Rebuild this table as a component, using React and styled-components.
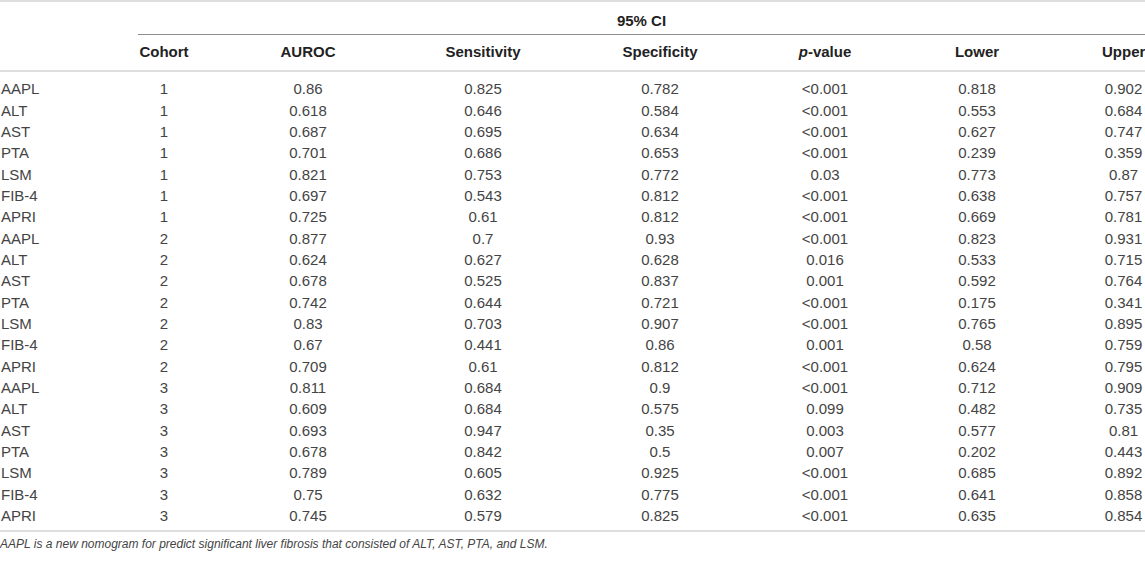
import React from 'react';
import styled, { createGlobalStyle } from 'styled-components';

const GlobalStyle = createGlobalStyle`
  html, body {
    margin: 0;
    background: #fff;
    overflow: hidden;
  }
  body {
    font-family: "Liberation Sans", Arial, Helvetica, sans-serif;
    color: #444;
  }
`;

const columns = '138px 52px 236px 114px 240px 90px 214px 61px';

const Table = styled.div`
  width: 1145px;
  border-top: 2px solid #dedede;
`;

const SpanRow = styled.div`
  display: grid;
  grid-template-columns: ${columns};
  height: 33px;
  padding-top: 5px;
  box-sizing: border-box;
`;

const SpanCell = styled.div`
  grid-column: 2 / -1;
  display: flex;
  align-items: center;
  justify-content: center;
  border-bottom: 1px solid #8e8e8e;
  font-size: 15px;
  font-weight: bold;
  color: #222;
`;

const Row = styled.div`
  display: grid;
  grid-template-columns: ${columns};
  align-items: center;
  height: ${({ $head }) => ($head ? '37px' : '21.35px')};
  padding-bottom: ${({ $head }) => ($head ? '3px' : '0')};
  box-sizing: border-box;
  font-size: 15px;
  font-weight: ${({ $head }) => ($head ? 'bold' : 'normal')};
  color: ${({ $head }) => ($head ? '#222' : '#444')};
  border-bottom: ${({ $head }) => ($head ? '2px solid #dedede' : 'none')};

  & > *:last-child {
    padding-left: 18px;
  }
`;

const Cell = styled.div`
  text-align: ${({ $left }) => ($left ? 'left' : 'center')};
  padding-left: ${({ $left }) => ($left ? '1px' : '0')};
  white-space: nowrap;
`;

const Body = styled.div`
  padding: 6px 0 4px;
  border-bottom: 2px solid #dedede;
`;

const Note = styled.p`
  margin: 4px 0 0;
  font-size: 12px;
  font-style: italic;
  line-height: 16px;
  color: #444;
`;

const rows = [
  ['AAPL', '1', '0.86', '0.825', '0.782', '<0.001', '0.818', '0.902'],
  ['ALT', '1', '0.618', '0.646', '0.584', '<0.001', '0.553', '0.684'],
  ['AST', '1', '0.687', '0.695', '0.634', '<0.001', '0.627', '0.747'],
  ['PTA', '1', '0.701', '0.686', '0.653', '<0.001', '0.239', '0.359'],
  ['LSM', '1', '0.821', '0.753', '0.772', '0.03', '0.773', '0.87'],
  ['FIB-4', '1', '0.697', '0.543', '0.812', '<0.001', '0.638', '0.757'],
  ['APRI', '1', '0.725', '0.61', '0.812', '<0.001', '0.669', '0.781'],
  ['AAPL', '2', '0.877', '0.7', '0.93', '<0.001', '0.823', '0.931'],
  ['ALT', '2', '0.624', '0.627', '0.628', '0.016', '0.533', '0.715'],
  ['AST', '2', '0.678', '0.525', '0.837', '0.001', '0.592', '0.764'],
  ['PTA', '2', '0.742', '0.644', '0.721', '<0.001', '0.175', '0.341'],
  ['LSM', '2', '0.83', '0.703', '0.907', '<0.001', '0.765', '0.895'],
  ['FIB-4', '2', '0.67', '0.441', '0.86', '0.001', '0.58', '0.759'],
  ['APRI', '2', '0.709', '0.61', '0.812', '<0.001', '0.624', '0.795'],
  ['AAPL', '3', '0.811', '0.684', '0.9', '<0.001', '0.712', '0.909'],
  ['ALT', '3', '0.609', '0.684', '0.575', '0.099', '0.482', '0.735'],
  ['AST', '3', '0.693', '0.947', '0.35', '0.003', '0.577', '0.81'],
  ['PTA', '3', '0.678', '0.842', '0.5', '0.007', '0.202', '0.443'],
  ['LSM', '3', '0.789', '0.605', '0.925', '<0.001', '0.685', '0.892'],
  ['FIB-4', '3', '0.75', '0.632', '0.775', '<0.001', '0.641', '0.858'],
  ['APRI', '3', '0.745', '0.579', '0.825', '<0.001', '0.635', '0.854'],
];

const App = () => (
  <>
    <GlobalStyle />
    <Table>
      <SpanRow>
        <SpanCell>95% CI</SpanCell>
      </SpanRow>
      <Row $head>
        <Cell $left />
        <Cell>Cohort</Cell>
        <Cell>AUROC</Cell>
        <Cell>Sensitivity</Cell>
        <Cell>Specificity</Cell>
        <Cell>
          <i>p</i>-value
        </Cell>
        <Cell>Lower</Cell>
        <Cell>Upper</Cell>
      </Row>
      <Body>
        {rows.map((r, i) => (
          <Row key={i}>
            {r.map((v, j) => (
              <Cell key={j} $left={j === 0}>
                {v}
              </Cell>
            ))}
          </Row>
        ))}
      </Body>
    </Table>
    <Note>
      AAPL is a new nomogram for predict significant liver fibrosis that consisted of ALT, AST, PTA, and LSM.
    </Note>
  </>
);

export default App;
